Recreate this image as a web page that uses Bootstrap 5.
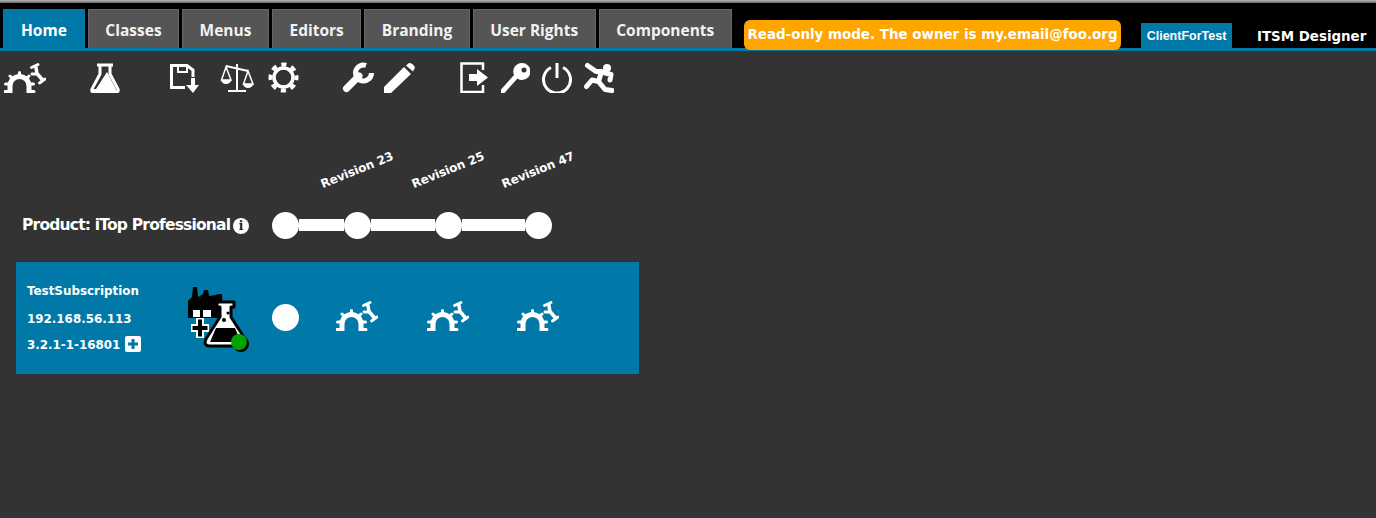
<!DOCTYPE html>
<html lang="en">
<head>
    <meta charset="UTF-8">
    <title>ITSM Designer</title>
    <link href="https://cdn.jsdelivr.net/npm/bootstrap@5.3.3/dist/css/bootstrap.min.css" rel="stylesheet">
    <style>
        body {
            background-color: #333;
            color: #fff;
            font-family: "DejaVu Sans", sans-serif;
            overflow: hidden;
        }
        .top-strip {
            height: 3px;
            background: linear-gradient(#b5b5b5, #666);
        }
        .top-bar {
            height: 48px;
            background-color: #000;
            border-bottom: 3px solid #0079a8;
            padding-left: 3px;
        }
        .main-tabs {
            gap: 3px;
            width: 741px;
            flex: none;
        }
        .main-tabs .nav-link {
            height: 39px;
            padding: 0 16.5px;
            margin-bottom: -2px;
            background-color: #555;
            border: 1px solid #666;
            border-bottom: 0;
            color: #f2f2f2;
            font: 700 15.5px/41px "Open Sans", sans-serif;
            white-space: nowrap;
        }
        .main-tabs .nav-link.active {
            height: 41px;
            padding: 0 17px;
            background-color: #0079a8;
            border-color: #0079a8;
            color: #fff;
        }
        .readonly-note {
            width: 377px;
            height: 30px;
            margin-bottom: -2px;
            background-color: #ffa500;
            border-radius: 6px;
            font-weight: 700;
            font-size: 13.45px;
            line-height: 30px;
            text-align: center;
            white-space: nowrap;
            position: relative;
            flex: none;
        }
        .client-tag {
            width: 91px;
            height: 27px;
            margin-left: 20px;
            margin-bottom: -2px;
            background-color: #0079a8;
            font: 700 12.5px/27px "Liberation Sans", sans-serif;
            text-align: center;
            flex: none;
        }
        .app-title {
            margin-left: 25px;
            margin-bottom: 1px;
            font-weight: 700;
            font-size: 13.4px;
            white-space: nowrap;
        }
        .tool-row {
            height: 31px;
            margin-top: 11px;
        }
        .tool-row svg, .rev-line svg, .host-panel svg {
            display: block;
            flex: none;
        }
        .ic-line { fill: none; stroke: #fff; }
        .ic-fill { fill: #fff; }
        .sp-flask { margin-left: 44px; }
        .sp-save { margin-left: 50px; }
        .sp-scales { margin-left: 20px; }
        .sp-gear { margin-left: 14px; }
        .sp-wrench { margin-left: 43px; }
        .sp-pencil { margin-left: 10px; }
        .sp-login { margin-left: 44px; }
        .sp-key { margin-left: 11px; }
        .sp-power { margin-left: 12px; }
        .sp-run { margin-left: 12px; }
        .rev-labels {
            height: 42px;
            margin-top: 56px;
            margin-bottom: 20px;
            padding-left: 317px;
        }
        .rev-label {
            width: 80px;
            margin-right: 10.5px;
            font-weight: 700;
            font-size: 12px;
            letter-spacing: -0.1px;
            line-height: 16px;
            white-space: nowrap;
            text-align: center;
            transform: rotate(-22deg);
        }
        .rev-line {
            height: 29px;
            padding-left: 22px;
        }
        .product-name {
            width: 209px;
            font: 700 15.5px/29px "DejaVu Sans", sans-serif;
            letter-spacing: -0.8px;
            white-space: nowrap;
            flex: none;
        }
        .info-dot {
            width: 16px;
            height: 16px;
            margin-left: 2px;
            margin-right: 23px;
            flex: none;
            border-radius: 50%;
            background-color: #fff;
            color: #222;
            font: 700 12px/16px "DejaVu Serif", serif;
            text-align: center;
        }
        .rev-dot {
            width: 27px;
            height: 27px;
            flex: none;
            border-radius: 50%;
            background-color: #fff;
        }
        .rev-bar {
            height: 12px;
            margin-top: -1px;
            background-color: #fff;
        }
        .w-45 { width: 45px; }
        .w-64 { width: 64px; }
        .w-63 { width: 63px; }
        .host-panel {
            width: 623px;
            height: 112px;
            margin: 22px 0 0 16px;
            background-color: #0079a8;
        }
        .host-info {
            width: 171px;
            padding: 20px 0 0 11px;
            font-weight: 700;
            font-size: 11.9px;
            flex: none;
        }
        .host-info div { height: 27px; line-height: 18px; white-space: nowrap; }
        .host-info div:first-child { height: 28px; }
        .host-info div:nth-child(2) { height: 26px; }
        .plus-box {
            display: inline-block;
            width: 16px;
            height: 16px;
            margin-left: 5px;
            vertical-align: -3px;
            background-color: #fff;
            border-radius: 2px;
        }
        .sp-dot { margin-left: 20px; margin-top: 42px; }
        .sp-g1, .sp-g2, .sp-g3 { margin-top: 38px; }
        .sp-g1 { margin-left: 37px; }
        .sp-g2 { margin-left: 49px; }
        .sp-g3 { margin-left: 48px; }
        .plant-icon { margin-top: 24px; margin-left: -1px; }
    </style>
</head>
<body>
    <svg width="0" height="0" class="position-absolute">
        <symbol id="broken-gear" viewBox="0 0 42 31">
            <path d="M6 31V24A9.500 9.500 0 0 1 25 24V31" fill="none" stroke="#fff" stroke-width="5"/>
            <path d="M1.500 22H5M6 14 8 16M15.500 10.500V13M25 14 23 16M29.500 22H26M1 29.500H6M25 29.500H30" fill="none" stroke="#fff" stroke-width="3" stroke-linecap="round"/>
            <path d="M31.500 3 33 11.500 39 18.500" fill="none" stroke="#fff" stroke-width="3.500" stroke-linejoin="round"/>
            <path d="M27.500 5.500 34 2.500M28 12H33M35.500 21 41 17" fill="none" stroke="#fff" stroke-width="2.800" stroke-linecap="round"/>
        </symbol>
    </svg>

    <div class="top-strip"></div>
    <div class="top-bar d-flex align-items-end">
        <ul class="nav main-tabs flex-nowrap">
            <li class="nav-item"><a class="nav-link active" href="#">Home</a></li>
            <li class="nav-item"><a class="nav-link" href="#">Classes</a></li>
            <li class="nav-item"><a class="nav-link" href="#">Menus</a></li>
            <li class="nav-item"><a class="nav-link" href="#">Editors</a></li>
            <li class="nav-item"><a class="nav-link" href="#">Branding</a></li>
            <li class="nav-item"><a class="nav-link" href="#">User Rights</a></li>
            <li class="nav-item"><a class="nav-link" href="#">Components</a></li>
        </ul>
        <div class="readonly-note">Read-only mode. The owner is my.email@foo.org</div>
        <div class="client-tag">ClientForTest</div>
        <div class="app-title">ITSM Designer</div>
    </div>

    <div class="tool-row d-flex">
        <svg width="42" height="31" class="ms-1"><use href="#broken-gear"/></svg>
        <svg class="sp-flask" width="30" height="31" viewBox="0 0 30 31">
            <path class="ic-line" stroke-width="3" d="M7 3H23M10 3V12L2 27Q1 30 4 30H26Q29 30 28 27L20 12V3"/>
            <path class="ic-fill" d="M17 10 28 31H2V27L6 27Z"/>
        </svg>
        <svg class="sp-save" width="30" height="31" viewBox="0 0 30 31">
            <path class="ic-line" stroke-width="3" d="M15 25.500H1.500V3.500H17L23 8V15"/>
            <path class="ic-line" stroke-width="2" d="M8 4V10H17V4"/>
            <path class="ic-fill" d="M21 16H25V23H29L23 31L16 23H21Z"/>
        </svg>
        <svg class="sp-scales" width="34" height="31" viewBox="0 0 34 31">
            <path class="ic-line" stroke-width="2" d="M17 2V28M8 29H26M6 4 28 9"/>
            <path class="ic-line" stroke-width="1.500" d="M6 5 1.500 18H11ZM28 9 23.500 22H33Z"/>
            <path class="ic-fill" d="M1 18H11.500Q10 22 6 22 2 22 1 18ZM23 22H33.500Q32 26 28 26 24 26 23 22Z"/>
        </svg>
        <svg class="sp-gear" width="31" height="31" viewBox="0 0 31 31">
            <circle class="ic-line" cx="15.500" cy="15.500" r="9.500" stroke-width="3.500"/>
            <circle class="ic-line" cx="15.500" cy="15.500" r="13" stroke-width="4" stroke-dasharray="5.200 5" stroke-dashoffset="2.600"/>
        </svg>
        <svg class="sp-wrench" width="32" height="31" viewBox="0 0 32 31">
            <path class="ic-line" stroke-width="7" stroke-linecap="round" d="M4.500 26.500 17 14"/>
            <path class="ic-line" stroke-width="5" d="M24 3.400A8 8 0 1 0 29.500 11"/>
        </svg>
        <svg class="sp-pencil" width="32" height="31" viewBox="0 0 32 31">
            <path class="ic-fill" d="M0 31V25L20 5 27 12 7 31ZM22 3.500 25 1Q29 1 31 5.500L29 9.500Z"/>
        </svg>
        <svg class="sp-login" width="29" height="31" viewBox="0 0 29 31">
            <path class="ic-line" stroke-width="2.500" d="M23 8V1.500H1.500V30H23V23"/>
            <path class="ic-fill" d="M9 12H17V7L28 15.500 17 24V19H9Z"/>
        </svg>
        <svg class="sp-key" width="30" height="31" viewBox="0 0 30 31">
            <path class="ic-fill" fill-rule="evenodd" d="M22 1A8.500 8.500 0 0 1 22 18Q19.500 18 17.500 16.500L4.500 31H1V27.500L14 13A8.500 8.500 0 0 1 22 1ZM24 5.500A2.500 2.500 0 1 0 24 10.500 2.500 2.500 0 0 0 24 5.500Z"/>
        </svg>
        <svg class="sp-power" width="30" height="31" viewBox="0 0 30 31">
            <path class="ic-line" stroke-width="3" d="M9 5.500A13.500 13.500 0 1 0 21 5.500"/>
            <path class="ic-line" stroke-width="3" d="M15 1V16"/>
        </svg>
        <svg class="sp-run" width="30" height="31" viewBox="0 0 30 31">
            <path class="ic-line" stroke-width="5" stroke-linejoin="round" stroke-linecap="round" d="M3.500 3.500 12 9.500H17.500L14.500 19.500 21 27.500 28 28.500M14.500 19.500 8 18 2.500 24.500M18 10 27 12.500 26 18"/>
            <circle class="ic-fill" cx="23" cy="6" r="4"/>
        </svg>
    </div>

    <div class="rev-labels d-flex align-items-center">
        <div class="rev-label">Revision 23</div>
        <div class="rev-label">Revision 25</div>
        <div class="rev-label">Revision 47</div>
    </div>

    <div class="rev-line d-flex align-items-center">
        <div class="product-name">Product: iTop Professional</div>
        <div class="info-dot">i</div>
        <div class="rev-dot"></div>
        <div class="rev-bar w-45"></div>
        <div class="rev-dot"></div>
        <div class="rev-bar w-64"></div>
        <div class="rev-dot"></div>
        <div class="rev-bar w-63"></div>
        <div class="rev-dot"></div>
    </div>

    <div class="host-panel d-flex">
        <div class="host-info">
            <div>TestSubscription</div>
            <div>192.168.56.113</div>
            <div>3.2.1-1-16801<span class="plus-box"><svg width="16" height="16" viewBox="0 0 16 16"><path d="M8 3V13M3 8H13" stroke="#0079a8" stroke-width="3"/></svg></span></div>
        </div>
        <svg class="plant-icon" width="66" height="66" viewBox="0 0 66 66">
            <path fill="#000" d="M2 32V15L6 11 7 1H11L12 11 17 8 18 4H22L23 10 30 9 32 8H36L37 32Z"/>
            <path fill="#fff" d="M7 24H14V31H7ZM17 24H25V31H17Z"/>
            <path d="M14 32V52M5 42H23" stroke="#fff" stroke-width="8"/>
            <path d="M14 33.500V50.500M6.500 42H21.500" stroke="#000" stroke-width="4"/>
            <path fill="#fff" stroke="#000" stroke-width="3" stroke-linejoin="round" d="M31 16H48V21H45V31L59 53Q62 60 55 60H24Q17 60 20 53L34 31V21H31Z"/>
            <path fill="#000" d="M30 42H49L55 56H24Z"/>
            <circle cx="38" cy="34" r="2" fill="#000"/><circle cx="42" cy="27" r="1.500" fill="#000"/>
            <circle cx="55" cy="58" r="8" fill="#000"/>
            <circle cx="53" cy="56" r="8" fill="#00a400"/>
        </svg>
        <div class="rev-dot sp-dot"></div>
        <svg class="sp-g1" width="42" height="31"><use href="#broken-gear"/></svg>
        <svg class="sp-g2" width="42" height="31"><use href="#broken-gear"/></svg>
        <svg class="sp-g3" width="42" height="31"><use href="#broken-gear"/></svg>
    </div>

    <script src="https://cdn.jsdelivr.net/npm/bootstrap@5.3.3/dist/js/bootstrap.bundle.min.js"></script>
</body>
</html>
